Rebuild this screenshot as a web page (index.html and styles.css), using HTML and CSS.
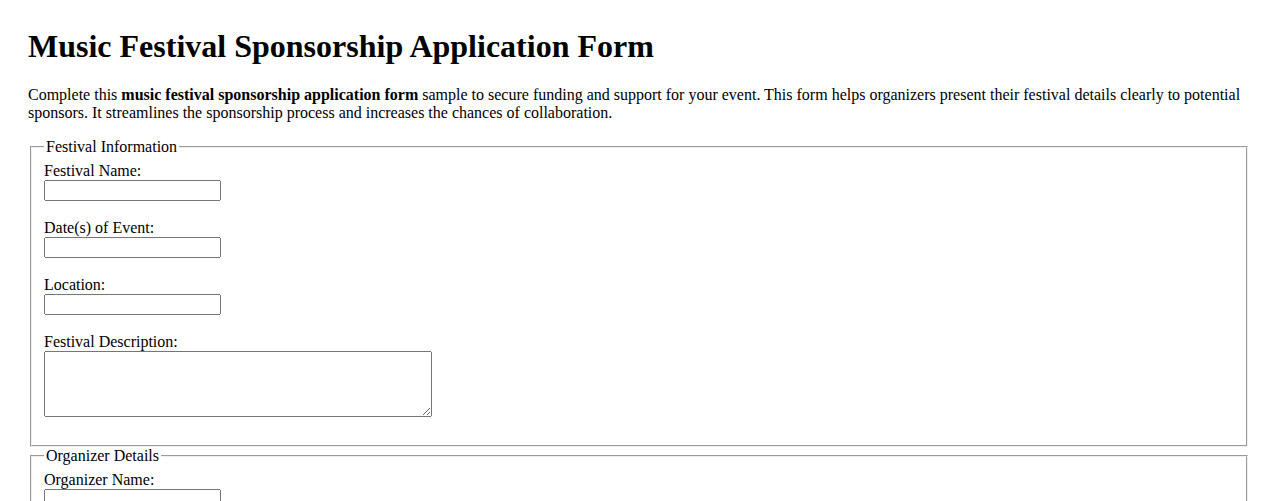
FILE: index.html
```html
<!DOCTYPE html>
<html lang="en">
<head>
    <meta charset="UTF-8">
    <meta name="viewport" content="width=device-width, initial-scale=1.0">
    <title>Music Festival Sponsorship Application Form</title>
    <link rel="stylesheet" href="styles.css">
</head>
<body>
    <h1>Music Festival Sponsorship Application Form</h1>
    <p>Complete this <strong>music festival sponsorship application form</strong> sample to secure funding and support for your event. This form helps organizers present their festival details clearly to potential sponsors. It streamlines the sponsorship process and increases the chances of collaboration.</p>

    <form class="sponsor-form">
        <fieldset>
            <legend>Festival Information</legend>
            <label for="festival-name">Festival Name:</label><br>
            <input type="text" id="festival-name" name="festival-name"><br><br>

            <label for="event-dates">Date(s) of Event:</label><br>
            <input type="text" id="event-dates" name="event-dates"><br><br>

            <label for="location">Location:</label><br>
            <input type="text" id="location" name="location"><br><br>

            <label for="description">Festival Description:</label><br>
            <textarea id="description" name="description" rows="4" cols="50"></textarea><br><br>
        </fieldset>

        <fieldset>
            <legend>Organizer Details</legend>
            <label for="organizer-name">Organizer Name:</label><br>
            <input type="text" id="organizer-name" name="organizer-name"><br><br>

            <label for="organizer-email">Email:</label><br>
            <input type="email" id="organizer-email" name="organizer-email"><br><br>

            <label for="organizer-phone">Phone:</label><br>
            <input type="tel" id="organizer-phone" name="organizer-phone"><br><br>
        </fieldset>
    </form>
</body>
</html>
```

FILE: styles.css
```css
body {
    margin: 28px;
    font-family: "Liberation Serif", "Times New Roman", serif;
    color: #000;
    background-color: #fff;
}

h1 {
    margin-top: 0;
}

fieldset {
    padding-bottom: 6px;
}

input {
    width: 177px;
    height: 21px;
    box-sizing: border-box;
}

textarea {
    width: 388px;
    height: 66px;
    box-sizing: border-box;
}
```
